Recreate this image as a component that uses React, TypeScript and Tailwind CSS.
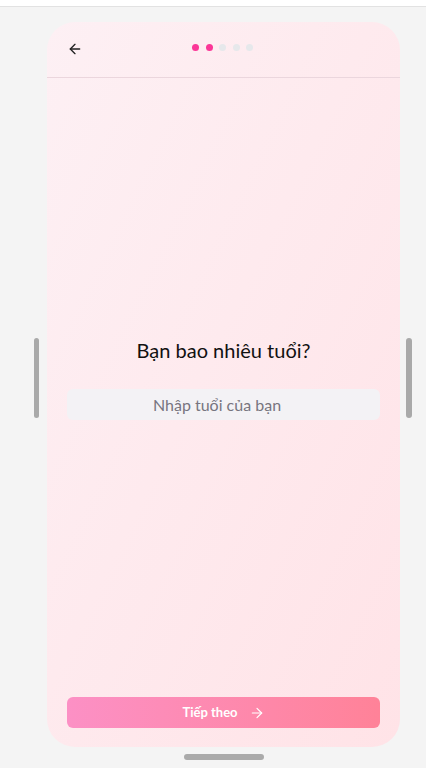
import React from "react";

export default function App() {
  return (
    <div
      className="relative w-[426px] h-[768px] bg-[#f4f4f4] overflow-hidden"
      style={{ fontFamily: "Lato, 'Noto Sans', sans-serif" }}
    >
      <div className="h-[7px] bg-white border-b border-[#e2e2e2]" />
      {/* side bars */}
      <div className="absolute left-[34px] top-[338px] w-[5px] h-[80px] rounded-full bg-[#a9a9a9]" />
      <div className="absolute left-[406px] top-[338px] w-[6px] h-[80px] rounded-full bg-[#a9a9a9]" />
      <div className="flex pt-[15px] pl-[47px]">
        <div className="w-[353px] h-[725px] rounded-[28px] bg-gradient-to-br from-[#fdf0f4] to-[#ffe3e7] flex flex-col overflow-hidden">
          <div className="h-[56px] shrink-0 border-b border-[#ebd6dd] flex items-center px-[20px] relative">
            <svg width="16" height="16" viewBox="0 0 24 24" fill="none" stroke="#222" strokeWidth="2" strokeLinecap="round" strokeLinejoin="round" className="mt-[-1px]">
              <path d="M19 12H5" />
              <path d="M12 19l-7-7 7-7" />
            </svg>
            <div className="absolute left-[145px] top-[22px] flex gap-[6.5px]">
              <div className="w-[7px] h-[7px] rounded-full bg-[#fb3697]" />
              <div className="w-[7px] h-[7px] rounded-full bg-[#fb3697]" />
              <div className="w-[7px] h-[7px] rounded-full bg-[#e6e8eb]" />
              <div className="w-[7px] h-[7px] rounded-full bg-[#e6e8eb]" />
              <div className="w-[7px] h-[7px] rounded-full bg-[#e6e8eb]" />
            </div>
          </div>
          <div className="flex-1 flex flex-col items-center pt-[258px] px-[20px]">
            <div className="text-[20px] text-[#111] leading-[28px]">Bạn bao nhiêu tuổi?</div>
            <input
              className="mt-[25px] w-full h-[31px] rounded-[6px] bg-[#f3f2f5] text-center pr-[13px] text-[16px] text-[#333] placeholder:text-[#77757f] outline-none"
              style={{ fontFamily: "Lato, 'Noto Sans', sans-serif" }}
              placeholder="Nhập tuổi của bạn"
            />
          </div>
          <div className="px-[20px] pb-[19px]">
            <button
              className="w-full h-[31px] rounded-[6px] bg-gradient-to-r from-[#fc90c5] to-[#ff8298] flex items-center justify-center gap-[11px] text-white text-[13px] font-bold"
              style={{ fontFamily: "Lato, 'Noto Sans', sans-serif" }}
            >
              <span>Tiếp theo</span>
              <svg width="16" height="16" viewBox="0 0 24 24" fill="none" stroke="white" strokeWidth="1.8" strokeLinecap="round" strokeLinejoin="round">
                <path d="M5 12h14" />
                <path d="M12 5l7 7-7 7" />
              </svg>
            </button>
          </div>
        </div>
      </div>
      <div className="flex mt-[7px] pl-[184px]">
        <div className="w-[80px] h-[6px] rounded-full bg-[#aaaaaa]" />
      </div>
    </div>
  );
}
